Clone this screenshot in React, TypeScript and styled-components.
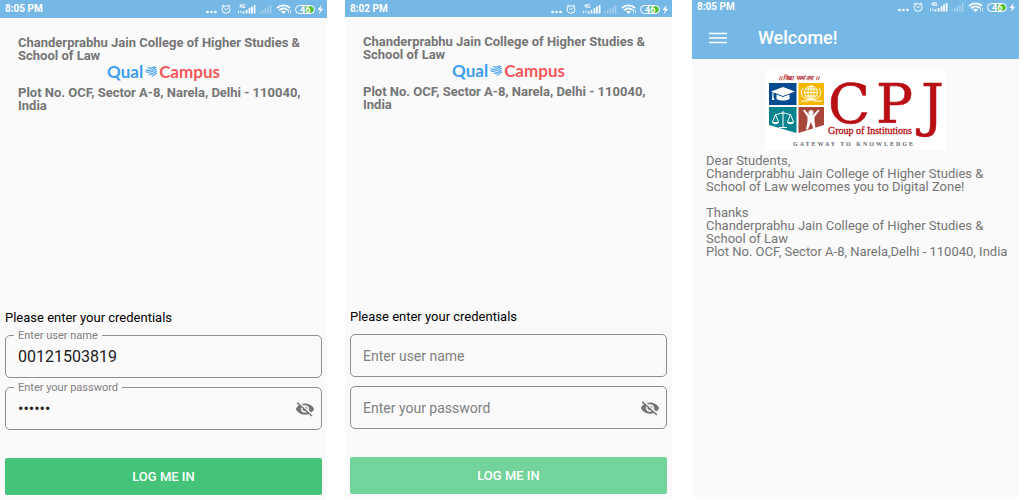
import React, { useId, useState } from "react";
import styled, { createGlobalStyle } from "styled-components";

const GlobalStyle = createGlobalStyle`
  *, *::before, *::after { box-sizing: border-box; }
  body {
    margin: 0;
    background: #ffffff;
    font-family: Roboto, "Liberation Sans", sans-serif;
  }
`;

const Screens = styled.main`
  display: grid;
  grid-template-columns: 1fr 18px 1fr 20px 1fr 5px;
  min-height: 100vh;
`;

const Phone = styled.section<{ $column: number; $bottom: number }>`
  grid-column: ${(p) => p.$column};
  display: flex;
  flex-direction: column;
  min-width: 0;
  margin-bottom: ${(p) => p.$bottom}px;
  background: #fafafa;
`;

const StatusBar = styled.div<{ $height: number }>`
  display: flex;
  align-items: center;
  justify-content: space-between;
  height: ${(p) => p.$height}px;
  padding: 0 3px 0 5px;
  background: #75b8e6;
  color: #ffffff;
  font-size: 10px;
  font-weight: 700;
  line-height: 12px;
`;

const AppBar = styled.header`
  display: flex;
  align-items: center;
  gap: 31px;
  height: 46px;
  padding: 3px 17px 0;
  background: #75b8e6;
  color: #ffffff;
`;

const MenuButton = styled.button`
  display: flex;
  padding: 0;
  border: 0;
  background: none;
  color: inherit;
`;

const Title = styled.h1`
  margin: 0;
  font-size: 18px;
  font-weight: 500;
  line-height: 20px;
`;

const College = styled.header`
  display: flex;
  flex-direction: column;
  padding: 18px 18px 0;
  color: #757575;
`;

const CollegeLine = styled.p`
  margin: 0;
  font-size: 13px;
  font-weight: 700;
  line-height: 13px;
`;

const Brand = styled.div`
  display: flex;
  align-items: center;
  justify-content: center;
  gap: 2px;
  height: 20px;
  margin-bottom: 4px;
  font-family: Lato, sans-serif;
  font-size: 17px;
  font-weight: 700;
  line-height: 20px;
`;

const BrandWord = styled.span<{ $color: string }>`
  color: ${(p) => p.$color};
`;

const Form = styled.form`
  display: flex;
  flex-direction: column;
  margin-top: auto;
  padding: 0 5px 5px;
`;

const Prompt = styled.h2`
  margin: 0 0 10px;
  color: #000000;
  font-size: 13px;
  font-weight: 400;
  line-height: 14px;
`;

const Field = styled.div`
  position: relative;
  display: flex;
  align-items: center;
  height: 43px;
  margin-bottom: 9px;
  padding: 0 6px 0 12px;
  border: 1px solid #8f8f8f;
  border-radius: 5px;
`;

const FloatingLabel = styled.label`
  position: absolute;
  top: -6px;
  left: 8px;
  padding: 0 4px;
  background: #fafafa;
  color: #808080;
  font-size: 11px;
  line-height: 12px;
`;

const Input = styled.input`
  flex: 1;
  min-width: 0;
  padding: 0;
  border: 0;
  outline: 0;
  background: none;
  color: #212121;
  font-family: inherit;
  font-size: 16px;
  line-height: 20px;

  &::placeholder {
    color: #808080;
    font-size: 14px;
    opacity: 1;
  }
`;

const IconButton = styled.button`
  display: flex;
  padding: 0;
  border: 0;
  background: none;
  color: #757575;
`;

const Submit = styled.button`
  height: 37px;
  margin-top: 19px;
  border: 0;
  border-radius: 2px;
  background: #43c478;
  color: #ffffff;
  font-family: inherit;
  font-size: 13px;
  font-weight: 500;
  line-height: 14px;

  &:disabled {
    background: #72d49a;
  }
`;

const Welcome = styled.article`
  display: flex;
  flex-direction: column;
  padding: 12px 0 12px 14px;
  color: #757575;
  font-size: 13px;
  line-height: 13px;
`;

const LogoCard = styled.div`
  display: flex;
  align-self: center;
  margin: 0 14px 4px 0;
  background: #ffffff;
`;

const Message = styled.p`
  margin: 0 0 13px;
`;

function StatusIcons() {
  return (
    <svg width="119" height="12" viewBox="205 3 119 12" fill="none" stroke="#fff" aria-hidden="true">
      <g fill="#fff" stroke="none">
        <circle cx="207.5" cy="12" r="1.3" />
        <circle cx="211.5" cy="12" r="1.3" />
        <circle cx="215.5" cy="12" r="1.3" />
      </g>
      <ellipse cx="226" cy="9.5" rx="4" ry="3.8" />
      <path d="M224.3 8.2l1.700 1.600 1.900-1.600M221.600 6.200l2.200-1.600M230.400 6.200l-2.200-1.600" strokeWidth="0.9" />
      <text x="239" y="8" fill="#fff" stroke="none" fontSize="5" fontWeight="700">4G</text>
      <path d="M238.5 13v-2.500M240.800 13v-2.500" strokeWidth="0.8" />
      <path d="M243.500 13.500v-2M246.500 13.500v-3.500M249.500 13.500v-5.500M252 13.500v-7M254.600 13.500v-8.500" strokeWidth="1.7" />
      <path d="M260 13.500v-2M262.700 13.500v-3.500M265.300 13.500v-5M268 13.500v-6.500M270.600 13.500v-8.500" strokeWidth="1.4" opacity="0.4" />
      <path d="M277 8c4-3.600 9.200-3.600 13 0M279.200 10.200c2.700-2.300 6-2.300 8.600 0" strokeWidth="1.8" />
      <path d="M281 11.600c1.600-1.200 3.400-1.200 5 0l-2.500 2.300z" fill="#fff" stroke="none" />
      <path d="M288.500 9.500v4M290.500 10v3.500" strokeWidth="0.8" opacity="0.8" />
      <rect x="295.500" y="5.500" width="19" height="8" rx="4" />
      <path d="M305 6.500h5.500a3 3 0 0 1 0 6H305z" fill="#4bc323" stroke="none" />
      <text x="300" y="12.500" fill="#fff" stroke="none" fontSize="9" fontWeight="700">46</text>
      <path d="M321.500 5l-4 5h2.500l-1.200 4 4.400-5.200h-2.600z" fill="#fff" stroke="none" />
    </svg>
  );
}

function BrandMark() {
  return (
    <svg width="12" height="12" viewBox="0 0 12 12" fill="none" stroke="#3d9df0" strokeWidth="1.1" strokeLinecap="round" aria-hidden="true">
      <path d="M3 1.500c2.300 1 4.500.7 6.500-.7M1 3.700c3 1.300 6.500.6 9.600-2M.8 5.800c3.800 1.200 7.500 0 10.400-2.600M4 8.300c3 0 5.500-1.300 7.400-3.200M7 10c2-.6 3.300-1.500 4.400-2.900" />
    </svg>
  );
}

function EyeOff() {
  return (
    <svg width="20" height="18" viewBox="0 0 24 24" preserveAspectRatio="none" fill="currentColor" aria-hidden="true">
      <path d="M12 7c2.760 0 5 2.240 5 5 0 .65-.13 1.260-.36 1.830l2.920 2.920c1.510-1.260 2.700-2.890 3.430-4.750-1.730-4.390-6-7.500-11-7.500-1.400 0-2.740.25-3.980.7l2.160 2.160C10.740 7.130 11.350 7 12 7zM2 4.270l2.280 2.280.46.46C3.080 8.300 1.780 10.020 1 12c1.730 4.390 6 7.500 11 7.500 1.550 0 3.030-.3 4.380-.84l.42.42L19.730 22 21 20.730 3.270 3 2 4.270zM7.530 9.800l1.550 1.550c-.05.21-.08.43-.08.65 0 1.660 1.340 3 3 3 .22 0 .44-.03.65-.08l1.550 1.550c-.67.33-1.410.53-2.200.53-2.760 0-5-2.240-5-5 0-.79.2-1.530.53-2.200zm4.310-.78l3.150 3.150.02-.16c0-1.660-1.340-3-3-3l-.17.01z" />
    </svg>
  );
}

function CpjLogo() {
  return (
    <svg width="181" height="79" viewBox="0 0 181 79" role="img" aria-label="CPJ Group of Institutions">
      <text x="13" y="9" fill="#b01217" fontSize="6" fontWeight="700" fontStyle="italic">।। विद्या परमं तपः ।।</text>
      <path d="M4 12h27.500v22H4z" fill="#064a8f" />
      <path d="M33.500 12H59v22H33.500z" fill="#f5b800" />
      <path d="M4 36h27.500v26L4 54z" fill="#07838f" />
      <path d="M33.500 36H59v18l-25.500 8z" fill="#a8453a" />
      <path d="M6 20.500l12-4.500 12 4.500-12 4.500zM11.500 23.500l6.500 2.500 6.500-2.500v4.500c-4 2-9 2-13 0zM7.500 21h1v5l1 3H7z" fill="#fff" />
      <g fill="none" stroke="#fff" strokeWidth="1">
        <ellipse cx="46" cy="21.500" rx="6.500" ry="6.500" />
        <ellipse cx="46" cy="21.500" rx="3" ry="6.500" />
        <path d="M46 15v13M39.500 21.500h13M40.800 18h10.400M40.800 25h10.400M38 17c-4 6 0 12 8 12s12-6 8-12M36 30h7l3-1.500 3 1.500h8" />
        <path d="M18 40v16M10.500 43.500c3 0 4-1.500 7.500-1.500s4.500 1.500 7.500 1.500M10.500 43.500l-3 7.500M10.500 43.500l3 7.500M25.500 43.500l-3 7.500M25.500 43.500l3 7.500M14 56.500h8" />
      </g>
      <path d="M7 51h7c-1 3-6 3-7 0zM22 51h7c-1 3-6 3-7 0z" fill="#fff" />
      <circle cx="46" cy="41.500" r="2.500" fill="#fff" />
      <path d="M38 39.500l1.500-.8 5 5.300h3.500l5-5.300 1.500.8-5 6.500v4l1 8h-2l-2.500-7-3 7.500h-2l1.500-8.500v-4z" fill="#fff" />
      <g fill="#b80f14" fontFamily="DejaVu Serif, serif">
        <text x="63" y="52" fontSize="55" stroke="#b80f14" strokeWidth="0.6">C</text>
        <text x="111" y="52" fontSize="55" stroke="#b80f14" strokeWidth="0.6">P</text>
        <text x="156" y="54" fontSize="57" stroke="#b80f14" strokeWidth="0.6">J</text>
        <text x="63" y="63" fontFamily="Liberation Serif, serif" fontSize="10" stroke="#b80f14" strokeWidth="0.3">Group of Institutions</text>
      </g>
      <text x="28" y="75" fill="#5d6770" fontFamily="Liberation Serif, serif" fontSize="6" fontWeight="700" letterSpacing="2">GATEWAY TO KNOWLEDGE</text>
    </svg>
  );
}

function Status({ time, height }: { time: string; height: number }) {
  return (
    <StatusBar $height={height}>
      <time>{time}</time>
      <StatusIcons />
    </StatusBar>
  );
}

function LoginScreen(props: {
  column: number;
  bottom: number;
  time: string;
  barHeight: number;
  user: string;
  secret: string;
}) {
  const id = useId();
  const [user, setUser] = useState(props.user);
  const [secret, setSecret] = useState(props.secret);
  const [visible, setVisible] = useState(false);
  return (
    <Phone $column={props.column} $bottom={props.bottom}>
      <Status time={props.time} height={props.barHeight} />
      <College>
        <CollegeLine>Chanderprabhu Jain College of Higher Studies &amp; School of Law</CollegeLine>
        <Brand>
          <BrandWord $color="#3d9df0">Qual</BrandWord>
          <BrandMark />
          <BrandWord $color="#f4575b">Campus</BrandWord>
        </Brand>
        <CollegeLine>Plot No. OCF, Sector A-8, Narela, Delhi - 110040, India</CollegeLine>
      </College>
      <Form onSubmit={(e) => e.preventDefault()}>
        <Prompt>Please enter your credentials</Prompt>
        <Field>
          {user && <FloatingLabel htmlFor={id + "user"}>Enter user name</FloatingLabel>}
          <Input
            id={id + "user"}
            aria-label="Enter user name"
            placeholder="Enter user name"
            value={user}
            onChange={(e) => setUser(e.target.value)}
          />
        </Field>
        <Field>
          {secret && <FloatingLabel htmlFor={id + "secret"}>Enter your password</FloatingLabel>}
          <Input
            id={id + "secret"}
            type={visible ? "text" : "password"}
            aria-label="Enter your password"
            placeholder="Enter your password"
            value={secret}
            onChange={(e) => setSecret(e.target.value)}
          />
          <IconButton type="button" aria-label="Show password" onClick={() => setVisible(!visible)}>
            <EyeOff />
          </IconButton>
        </Field>
        <Submit type="submit" disabled={!user || !secret}>LOG ME IN</Submit>
      </Form>
    </Phone>
  );
}

export default function App() {
  return (
    <>
      <GlobalStyle />
      <Screens>
        <LoginScreen column={1} bottom={0} time="8:05 PM" barHeight={18} user="00121503819" secret="secret" />
        <LoginScreen column={3} bottom={1} time="8:02 PM" barHeight={17} user="" secret="" />
        <Phone $column={5} $bottom={3}>
          <Status time="8:05 PM" height={13} />
          <AppBar>
            <MenuButton type="button" aria-label="Menu">
              <svg width="18" height="12" viewBox="0 0 18 12" stroke="currentColor" strokeWidth="1.5" aria-hidden="true">
                <path d="M0 1.500h18M0 6h18M0 10.500h18" />
              </svg>
            </MenuButton>
            <Title>Welcome!</Title>
          </AppBar>
          <Welcome>
            <LogoCard>
              <CpjLogo />
            </LogoCard>
            <Message>
              Dear Students,
              <br />
              Chanderprabhu Jain College of Higher Studies &amp; School of Law welcomes you to Digital Zone!
            </Message>
            <Message>
              Thanks
              <br />
              Chanderprabhu Jain College of Higher Studies &amp; School of Law
              <br />
              Plot No. OCF, Sector A-8, Narela,Delhi - 110040, India
            </Message>
          </Welcome>
        </Phone>
      </Screens>
    </>
  );
}
